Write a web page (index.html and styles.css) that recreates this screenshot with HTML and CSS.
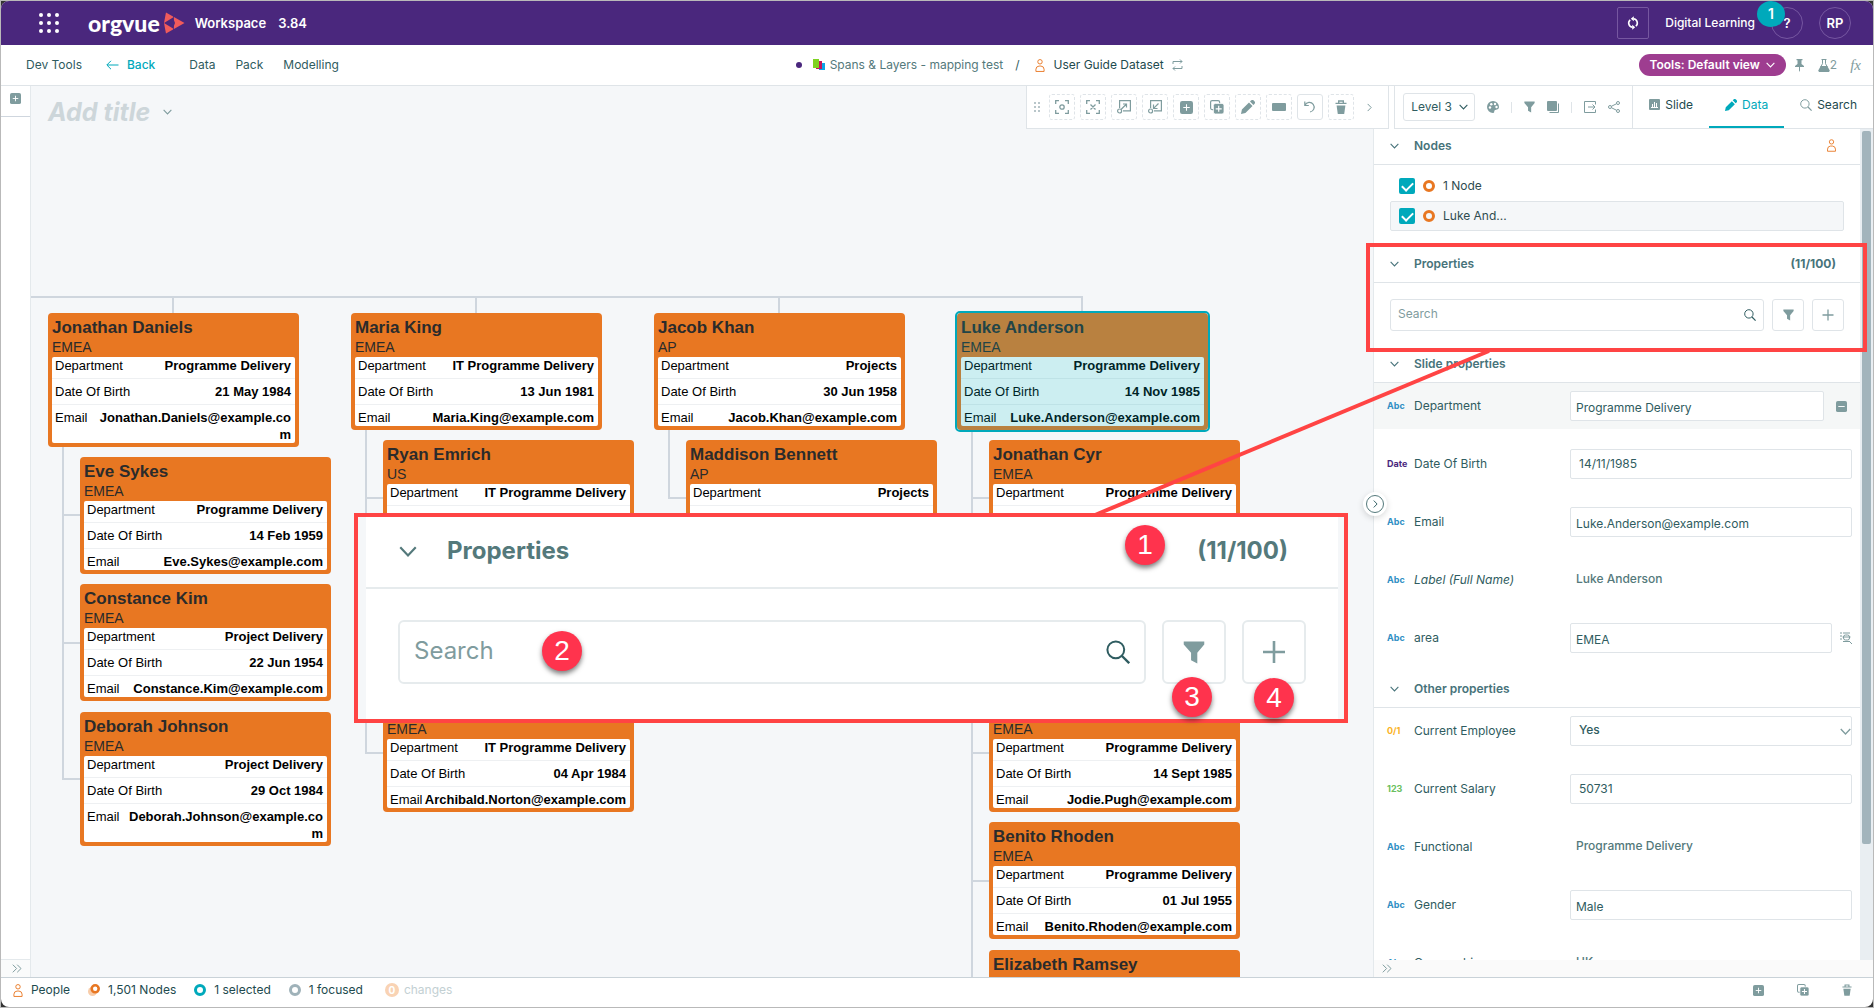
FILE: index.html
```html
<!DOCTYPE html>
<html lang="en">
<head>
  <meta charset="UTF-8" />
  <meta name="viewport" content="width=device-width, initial-scale=1.0" />
  <title>Orgvue Workspace</title>
  <link rel="stylesheet" href="styles.css">
</head>
<body>
  <!-- shared icons -->
  <svg class="sprite" aria-hidden="true">
    <symbol id="i-person" viewBox="0 0 10 14"><g fill="none" stroke="currentColor"><circle cx="5" cy="3" r="2.4" /><path d="M.6 13.4V11A3.6 3.6 0 0 1 4 7.6h2A3.6 3.6 0 0 1 9.4 11v2.4z" /></g></symbol>
    <symbol id="i-plus-box" viewBox="0 0 12 12"><rect width="12" height="12" rx="2" fill="currentColor" /><path d="M6 3v6M3 6h6" stroke="#fff" /></symbol>
    <symbol id="i-minus-box" viewBox="0 0 12 12"><rect width="12" height="12" rx="2" fill="currentColor" /><path d="M2.5 6h7" stroke="#fff" /></symbol>
    <symbol id="i-copy" viewBox="0 0 14 14"><rect x=".6" y=".6" width="9" height="9" rx="1.5" fill="none" stroke="currentColor" stroke-width="1.2" /><rect x="3.4" y="3.4" width="10.6" height="10.6" rx="2" fill="currentColor" stroke="#fff" stroke-width=".8" /><path d="M8.7 5.8v6M5.7 8.8h6" stroke="#fff" stroke-width="1.2" /></symbol>
    <symbol id="i-trash" viewBox="0 0 12 14"><path d="M.5 3.4h11M3.7 3V1h4.6v2" fill="none" stroke="currentColor" stroke-width="1.4" /><path d="M1.6 5.4h8.8L9.2 14H2.8z" fill="currentColor" /></symbol>
    <symbol id="i-down" viewBox="0 0 10 6"><path d="M.7.7 5 5.2 9.3.7" fill="none" stroke="currentColor" stroke-width="1.2" /></symbol>
    <symbol id="i-right" viewBox="0 0 6 10"><path d="M.8.7 5 5 .8 9.3" fill="none" stroke="currentColor" stroke-width="1.2" /></symbol>
    <symbol id="i-double" viewBox="0 0 10 9"><path d="M.8.7 4.6 4.5.8 8.3M5.2.7 9 4.5 5.2 8.3" fill="none" stroke="currentColor" /></symbol>
    <symbol id="i-filter" viewBox="0 0 12 12"><path d="M.4 0h11.2v1.6L7.8 6.2V12L4.4 10.2v-4L.4 1.6z" fill="currentColor" /></symbol>
    <symbol id="i-search" viewBox="0 0 12 12"><circle cx="4.9" cy="4.9" r="4.2" fill="none" stroke="currentColor" /><path d="m8 8 3.6 3.6" stroke="currentColor" stroke-width="1.2" /></symbol>
    <symbol id="i-pencil" viewBox="0 0 14 14"><path d="m0 14 .9-4.400L8 2.500 11.500 6l-7.100 7.100zM9 1.600l1-1a2 2 0 0 1 2.800 0l.6.6a2 2 0 0 1 0 2.800l-1 1z" fill="currentColor" /></symbol>
    <symbol id="i-plus" viewBox="0 0 12 12"><path d="M6 .5v11M.5 6h11" stroke="currentColor" stroke-width="1.3" /></symbol>
  </svg>

  <div class="app">
    <header class="topbar">
      <button class="icon-btn apps-btn" aria-label="Apps">
        <svg width="22" height="22" viewBox="0 0 22 22" fill="#fff"><circle cx="3" cy="3" r="2" /><circle cx="11" cy="3" r="2" /><circle cx="19" cy="3" r="2" /><circle cx="3" cy="11" r="2" /><circle cx="11" cy="11" r="2" /><circle cx="19" cy="11" r="2" /><circle cx="3" cy="19" r="2" /><circle cx="11" cy="19" r="2" /><circle cx="19" cy="19" r="2" /></svg>
      </button>
      <span class="logo">orgvue</span>
      <svg class="logo-mark" width="22" height="22" viewBox="0 0 22 22"><path d="M3 .5 21.5 11 3 21.500 1 11z" fill="#f15b5b" /><path d="M1 11 10 5.500 12 11 10 16.500z" fill="#4a277d" /><path d="M10.500 4v14" stroke="#4a277d" stroke-width=".8" /></svg>
      <span class="product">Workspace</span>
      <span class="version">3.84</span>
      <div class="topbar-right">
        <button class="icon-btn sync-btn" aria-label="Sync">
          <svg width="12" height="14" viewBox="0 0 12 14" fill="none" stroke="#fff" stroke-width="1.6"><path d="M6.5 2.800A4.200 4.200 0 0 1 8.800 10.200M5.500 11.200A4.200 4.200 0 0 1 3.200 3.800" /><path d="M6.800.3v5L3.800 2.800zM5.200 8.700v5l3-2.500z" fill="#fff" stroke="none" /></svg>
        </button>
        <span class="tenant">Digital Learning</span>
        <div class="help">
          <button class="round-btn" aria-label="Help">?</button>
          <span class="help-badge">1</span>
        </div>
        <button class="round-btn user-btn">RP</button>
      </div>
    </header>

    <nav class="navbar">
      <div class="nav-left">
        <a href="#">Dev Tools</a>
        <a href="#" class="back"><svg width="13" height="10" viewBox="0 0 13 10" fill="none" stroke="currentColor"><path d="M12.5 5H1M5 .8.8 5 5 9.2" /></svg>Back</a>
        <a href="#">Data</a>
        <a href="#">Pack</a>
        <a href="#">Modelling</a>
      </div>
      <div class="crumbs">
        <span class="dot"></span>
        <svg width="12" height="12" viewBox="0 0 12 12"><rect x="6" y="4" width="6" height="7" fill="#0aa5e8" /><rect x="3" y="2" width="6" height="8" fill="#c2185b" /><rect width="6" height="9" fill="#7ed321" /></svg>
        <a href="#" class="crumb">Spans &amp; Layers - mapping test</a>
        <span class="slash">/</span>
        <svg class="orange" width="10" height="13"><use href="#i-person" /></svg>
        <a href="#" class="crumb-current">User Guide Dataset</a>
        <svg class="muted" width="11" height="12" viewBox="0 0 11 12" fill="none" stroke="currentColor"><path d="M1 5V2.500h9M8 .5l2 2-2 2M10 7v2.500H1M3 7.500l-2 2 2 2" /></svg>
      </div>
      <div class="nav-right">
        <button class="view-pill">Tools: Default view <svg width="9" height="6"><use href="#i-down" /></svg></button>
        <button class="icon-btn" aria-label="Pin"><svg width="9" height="13" viewBox="0 0 9 13"><path d="M1.5 0h6v1.200h-1V5L9 7v1H5v3.500L4.500 13 4 11.500V8H0V7l2.500-2V1.200h-1z" fill="currentColor" /></svg></button>
        <button class="icon-btn lab-btn"><svg width="12" height="13" viewBox="0 0 12 13"><path d="M3.5.5h5M4.500.5v4.200L2.600 8M7.500.5v4.200L9.400 8" fill="none" stroke="currentColor" /><path d="M2.800 7h6.400l2.600 4.500L11 13H1L.2 11.500z" fill="currentColor" /></svg>2</button>
        <button class="icon-btn fx-btn">fx</button>
      </div>
    </nav>

    <main class="workspace">
      <aside class="rail">
        <button class="icon-btn rail-add" aria-label="Add"><svg width="11" height="11"><use href="#i-plus-box" /></svg></button>
        <button class="icon-btn rail-expand" aria-label="Expand"><svg width="10" height="9"><use href="#i-double" /></svg></button>
      </aside>

      <section class="canvas">
        <div class="chart" id="chart"></div>
        <h1 class="title">Add title <svg width="9" height="6"><use href="#i-down" /></svg></h1>
      </section>

      <aside class="panel">
        <div class="panel-scroll">
          <div class="panel-body">
            <h2 class="section-head"><svg width="9" height="6"><use href="#i-down" /></svg>Nodes <svg class="orange head-end" width="9" height="13"><use href="#i-person" /></svg></h2>
            <div class="node-list">
              <label class="node-row"><input type="checkbox" checked><span class="ring ring-orange"></span>1 Node</label>
              <label class="node-row current"><input type="checkbox" checked><span class="ring ring-orange"></span>Luke And...</label>
            </div>

            <h2 class="section-head"><svg width="9" height="6"><use href="#i-down" /></svg>Properties <span class="head-end">(11/100)</span></h2>
            <div class="prop-search">
              <label class="search-box"><input type="text" placeholder="Search" aria-label="Search properties"><svg width="12" height="12"><use href="#i-search" /></svg></label>
              <button class="square-btn" aria-label="Filter"><svg width="11" height="12"><use href="#i-filter" /></svg></button>
              <button class="square-btn" aria-label="Add property"><svg width="12" height="12"><use href="#i-plus" /></svg></button>
            </div>

            <h2 class="section-head"><svg width="9" height="6"><use href="#i-down" /></svg>Slide properties</h2>
            <div class="fields">
              <div class="field hovered">
                <span class="type abc">Abc</span><label for="department">Department</label>
                <input class="text" id="department" type="text" value="Programme Delivery">
                <button class="icon-btn minus-btn" aria-label="Remove"><svg width="11" height="11"><use href="#i-minus-box" /></svg></button>
              </div>
              <div class="field">
                <span class="type date">Date</span><label for="dob">Date Of Birth</label>
                <input id="dob" type="text" value="14/11/1985">
              </div>
              <div class="field">
                <span class="type abc">Abc</span><label for="email">Email</label>
                <input class="text" id="email" type="text" value="Luke.Anderson@example.com">
              </div>
              <div class="field">
                <span class="type abc">Abc</span><span class="name"><em>Label (Full Name)</em></span>
                <span class="readonly">Luke Anderson</span>
              </div>
              <div class="field">
                <span class="type abc">Abc</span><label for="area">area</label>
                <input class="text" id="area" type="text" value="EMEA">
                <button class="icon-btn lookup-btn" aria-label="Look up"><svg width="12" height="12" viewBox="0 0 12 12" fill="none" stroke="currentColor"><path d="M0 1h2M0 4h2M0 7h2M3 1h7M3 9.500h6M2.500 5h8M9 9l3 3" /><rect x="3.5" y="3" width="6" height="5" rx="2" /></svg></button>
              </div>
            </div>

            <h2 class="section-head"><svg width="9" height="6"><use href="#i-down" /></svg>Other properties</h2>
            <div class="fields">
              <div class="field">
                <span class="type bool">0/1</span><label for="employee">Current Employee</label>
                <span class="select-wrap"><select id="employee"><option>Yes</option><option>No</option></select><svg width="11" height="7"><use href="#i-down" /></svg></span>
              </div>
              <div class="field">
                <span class="type num">123</span><label for="salary">Current Salary</label>
                <input id="salary" type="text" value="50731">
              </div>
              <div class="field">
                <span class="type abc">Abc</span><span class="name">Functional</span>
                <span class="readonly">Programme Delivery</span>
              </div>
              <div class="field">
                <span class="type abc">Abc</span><label for="gender">Gender</label>
                <input class="text" id="gender" type="text" value="Male">
              </div>
              <div class="field">
                <span class="type abc">Abc</span><span class="name">Geographic</span>
                <span class="readonly">UK</span>
              </div>
            </div>
          </div>
          <div class="scrollbar"><div class="thumb"></div></div>
        </div>
        <div class="panel-foot"><button class="icon-btn" aria-label="Expand panel"><svg width="10" height="9"><use href="#i-double" /></svg></button></div>
        <button class="collapse-btn" aria-label="Collapse panel"><span><svg width="5" height="8"><use href="#i-right" /></svg></span></button>
        <div class="highlight"></div>
      </aside>

      <div class="tools">
        <div class="edit-tools">
          <svg class="grip" width="6" height="10" viewBox="0 0 6 10" fill="currentColor"><path d="M0 0h2v2H0zM4 0h2v2H4zM0 4h2v2H0zM4 4h2v2H4zM0 8h2v2H0zM4 8h2v2H4z" /></svg>
          <button class="tool" aria-label="Focus"><svg width="14" height="14" viewBox="0 0 14 14" fill="none" stroke="currentColor" stroke-width="1.3"><path d="M.7 4V.7H4M10 .7h3.300V4M13.300 10v3.300H10M4 13.300H.7V10" /><circle cx="7" cy="7" r="2.2" /></svg></button>
          <button class="tool" aria-label="Clear focus"><svg width="14" height="14" viewBox="0 0 14 14" fill="none" stroke="currentColor" stroke-width="1.3"><path d="M.7 4V.7H4M10 .7h3.300V4M13.300 10v3.300H10M4 13.300H.7V10M4.500 4.500l5 5M9.500 4.500l-5 5" /></svg></button>
          <button class="tool" aria-label="Expand"><svg width="14" height="14" viewBox="0 0 14 14" fill="none" stroke="currentColor" stroke-width="1.2"><path d="M2.6 8V.6h10.800v10.200H6M4 9.500l5-5M6 4h3.500v3.500" /><circle cx="2.6" cy="11" r="2" /></svg></button>
          <button class="tool" aria-label="Collapse"><svg width="14" height="14" viewBox="0 0 14 14" fill="none" stroke="currentColor" stroke-width="1.2"><path d="M2.6 8V.6h10.800v10.200H6M10.500 3.500 5.600 8.400M5.500 4.500v4h4" /><circle cx="2.6" cy="11" r="2" /></svg></button>
          <button class="tool" aria-label="Add node"><svg width="13" height="13"><use href="#i-plus-box" /></svg></button>
          <button class="tool" aria-label="Copy node"><svg width="14" height="14"><use href="#i-copy" /></svg></button>
          <button class="tool" aria-label="Edit"><svg width="14" height="14"><use href="#i-pencil" /></svg></button>
          <button class="tool" aria-label="Card"><svg width="14" height="8"><rect width="14" height="8" rx="1" fill="currentColor" /></svg></button>
          <button class="tool solid" aria-label="Undo"><svg width="12" height="12" viewBox="0 0 12 12" fill="none" stroke="currentColor" stroke-width="1.2"><path d="M.8.5v4h4M1 4.200A4.800 4.800 0 1 1 6 11" /></svg></button>
          <button class="tool" aria-label="Delete"><svg width="12" height="14"><use href="#i-trash" /></svg></button>
          <button class="icon-btn more-btn" aria-label="More"><svg width="5" height="9"><use href="#i-right" /></svg></button>
        </div>
        <div class="view-tools">
          <span class="level"><select aria-label="Level"><option>Level 3</option></select><svg width="9" height="6"><use href="#i-down" /></svg></span>
          <button class="icon-btn palette" aria-label="Colours"><svg width="12" height="12" viewBox="0 0 12 12"><path d="M6 0a6 6 0 0 0 0 12c1.500 0 1-1.500 1.500-2.500S12 9 12 6a6 6 0 0 0-6-6z" fill="currentColor" /><g fill="#fff"><circle cx="3" cy="6.5" r="1.2" /><circle cx="4.3" cy="3.2" r="1.2" /><circle cx="8" cy="3" r="1.2" /><circle cx="9.5" cy="6" r="1.2" /></g></svg></button>
          <span class="sep"></span>
          <button class="icon-btn" aria-label="Filter"><svg width="11" height="12"><use href="#i-filter" /></svg></button>
          <button class="icon-btn" aria-label="Layers"><svg width="12" height="12" viewBox="0 0 12 12"><rect width="10" height="10" rx="1" fill="currentColor" /><path d="M11.5 2.500v9h-9" fill="none" stroke="currentColor" /></svg></button>
          <span class="sep"></span>
          <button class="icon-btn" aria-label="Export"><svg width="12" height="12" viewBox="0 0 12 12" fill="none" stroke="currentColor"><path d="M11.5 3.500v-3H.5v11h11v-3M4 6h7M8.500 3.500 11 6 8.500 8.500" /></svg></button>
          <button class="icon-btn" aria-label="Share"><svg width="12" height="12" viewBox="0 0 12 12" fill="none" stroke="currentColor"><circle cx="2" cy="6" r="1.5" /><circle cx="10" cy="2" r="1.5" /><circle cx="10" cy="10" r="1.5" /><path d="m3.4 5.300 5.200-2.600M3.400 6.700l5.200 2.600" /></svg></button>
          <div class="tabs">
            <button class="tab"><svg width="11" height="11" viewBox="0 0 11 11"><rect width="11" height="11" rx="1" fill="currentColor" /><path d="M2 8.500h7M3.500 8V5M5.500 8V3M7.500 8V4" stroke="#fff" /></svg>Slide</button>
            <button class="tab active"><svg width="12" height="12"><use href="#i-pencil" /></svg>Data</button>
            <button class="tab"><svg width="12" height="12"><use href="#i-search" /></svg>Search</button>
          </div>
        </div>
      </div>
    </main>

    <footer class="statusbar">
      <span class="status"><svg class="orange" width="10" height="13"><use href="#i-person" /></svg>People</span>
      <span class="status"><svg width="12" height="12" viewBox="0 0 12 12" fill="none"><circle cx="4.5" cy="7.5" r="4.5" fill="#f8cdaa" /><circle cx="7.2" cy="4.8" r="3.5" fill="#fff" stroke="#e87722" stroke-width="2.6" /></svg>1,501 Nodes</span>
      <span class="status"><span class="ring ring-teal"></span>1 selected</span>
      <span class="status"><span class="ring ring-grey"></span>1 focused</span>
      <span class="status changes"><span class="count">0</span>changes</span>
      <div class="status-tools">
        <button class="icon-btn" aria-label="Add"><svg width="11" height="11"><use href="#i-plus-box" /></svg></button>
        <button class="icon-btn" aria-label="Copy"><svg width="12" height="12"><use href="#i-copy" /></svg></button>
        <button class="icon-btn" aria-label="Delete"><svg width="10" height="12"><use href="#i-trash" /></svg></button>
      </div>
    </footer>
  </div>

  <!-- guide annotations -->
  <svg class="leader"><path d="M1488 350 1094 514" stroke="#ff4444" stroke-width="4" /></svg>
  <div class="callout">
    <div class="callout-inner">
      <h2 class="callout-head"><svg width="18" height="11"><use href="#i-down" /></svg>Properties <span class="head-end">(11/100)</span></h2>
      <div class="callout-search">
        <label class="search-box"><input type="text" placeholder="Search" aria-label="Search"><svg width="24" height="24"><use href="#i-search" /></svg></label>
        <button class="square-btn" aria-label="Filter"><svg width="22" height="23"><use href="#i-filter" /></svg></button>
        <button class="square-btn" aria-label="Add"><svg width="24" height="24"><use href="#i-plus" /></svg></button>
      </div>
    </div>
    <span class="marker marker-1">1</span>
    <span class="marker marker-2">2</span>
    <span class="marker marker-3">3</span>
    <span class="marker marker-4">4</span>
  </div>

  <script>
    const cards = [
      { x: 17, y: 227, name: "Jonathan Daniels", area: "EMEA", dept: "Programme Delivery", dob: "21 May 1984", email: "Jonathan.Daniels@example.com" },
      { x: 49, y: 371, name: "Eve Sykes", area: "EMEA", dept: "Programme Delivery", dob: "14 Feb 1959", email: "Eve.Sykes@example.com" },
      { x: 49, y: 498, name: "Constance Kim", area: "EMEA", dept: "Project Delivery", dob: "22 Jun 1954", email: "Constance.Kim@example.com" },
      { x: 49, y: 626, name: "Deborah Johnson", area: "EMEA", dept: "Project Delivery", dob: "29 Oct 1984", email: "Deborah.Johnson@example.com" },
      { x: 320, y: 227, name: "Maria King", area: "EMEA", dept: "IT Programme Delivery", dob: "13 Jun 1981", email: "Maria.King@example.com" },
      { x: 352, y: 354, name: "Ryan Emrich", area: "US", dept: "IT Programme Delivery" },
      { x: 352, y: 609, name: "Archibald Norton", area: "EMEA", dept: "IT Programme Delivery", dob: "04 Apr 1984", email: "Archibald.Norton@example.com" },
      { x: 623, y: 227, name: "Jacob Khan", area: "AP", dept: "Projects", dob: "30 Jun 1958", email: "Jacob.Khan@example.com" },
      { x: 655, y: 354, name: "Maddison Bennett", area: "AP", dept: "Projects" },
      { x: 926, y: 227, name: "Luke Anderson", area: "EMEA", dept: "Programme Delivery", dob: "14 Nov 1985", email: "Luke.Anderson@example.com", selected: true },
      { x: 958, y: 354, name: "Jonathan Cyr", area: "EMEA", dept: "Programme Delivery" },
      { x: 958, y: 609, name: "Jodie Pugh", area: "EMEA", dept: "Programme Delivery", dob: "14 Sept 1985", email: "Jodie.Pugh@example.com" },
      { x: 958, y: 736, name: "Benito Rhoden", area: "EMEA", dept: "Programme Delivery", dob: "01 Jul 1955", email: "Benito.Rhoden@example.com" },
      { x: 958, y: 864, name: "Elizabeth Ramsey" }
    ];

    // trunk of each column: x, then the y of every branch
    const trunks = [
      { x: 32, branches: [429, 557, 693] },
      { x: 335, branches: [412, 667] },
      { x: 638, branches: [412] },
      { x: 941, branches: [412, 540, 667, 795, 900] }
    ];

    function row(label, value) {
      return value ? `<div class="card-row"><span>${label}</span><b>${value}</b></div>` : "";
    }

    function drawChart() {
      let path = "M0 211H1051";
      trunks.forEach(t => {
        path += `M${t.x + 110} 211V227M${t.x} 340V${t.branches[t.branches.length - 1]}`;
        t.branches.forEach(y => path += `M${t.x - 1} ${y}h18`);
      });
      path += "M1051 210V227";

      let html = `<svg class="links"><path d="${path}" /></svg>`;
      cards.forEach(c => {
        html += `
          <article class="card${c.selected ? " selected" : ""}" style="left:${c.x}px;top:${c.y}px">
            <h3>${c.name}</h3>
            <p>${c.area || "&nbsp;"}</p>
            <div class="card-body">
              ${row("Department", c.dept)}
              ${row("Date Of Birth", c.dob)}
              ${row("Email", c.email)}
            </div>
          </article>`;
      });
      document.getElementById("chart").innerHTML = html;
    }

    drawChart();
  </script>
</body>
</html>
```
FILE: styles.css
```css
* {
  box-sizing: border-box;
}
html, body {
  height: 100%;
}
body {
  margin: 0;
  background: #333;
  color: #2f5c60;
  font-family: Inter, "Liberation Sans", sans-serif;
  font-size: 12px;
  line-height: 16px;
  border: 1px solid #b9b9b9;
  position: relative;
  overflow: hidden;
}
h1, h2, h3, p {
  margin: 0;
}
svg {
  flex: none;
  display: block;
}
button, input, select {
  font: inherit;
  color: inherit;
}
button {
  cursor: pointer;
  padding: 0;
}
a {
  color: inherit;
  text-decoration: none;
}
.sprite {
  position: absolute;
  width: 0;
  height: 0;
}
.orange {
  color: #e87722;
}
.muted {
  color: #7f9c9e;
}
.icon-btn {
  background: none;
  border: 0;
  display: flex;
  align-items: center;
  color: #7f9c9e;
}
.app {
  height: 100%;
  display: flex;
  flex-direction: column;
  background: #fff;
  border-radius: 8px;
  overflow: hidden;
}

/* top bar */
.topbar {
  height: 44px;
  flex: none;
  background: #4a277d;
  color: #fff;
  display: flex;
  align-items: center;
  padding: 0 22px 0 37px;
  font-weight: 500;
}
.logo {
  font-family: Lato, sans-serif;
  font-weight: 900;
  font-size: 23px;
  line-height: 28px;
  margin-left: 28px;
}
.logo-mark {
  margin-left: 3px;
}
.product, .version {
  font-size: 13px;
  font-weight: 600;
}
.product {
  margin-left: 10px;
}
.version {
  margin-left: 12px;
}
.topbar-right {
  margin-left: auto;
  display: flex;
  align-items: center;
}
.sync-btn {
  width: 32px;
  height: 32px;
  justify-content: center;
  border: 1px solid #7657a0;
  border-radius: 2px;
}
.tenant {
  margin: 0 16px;
}
.round-btn {
  width: 32px;
  height: 32px;
  border: 1px solid #7657a0;
  border-radius: 50%;
  background: none;
  font-weight: 600;
  font-size: 13px;
}
.user-btn {
  margin-left: 16px;
}
.help {
  position: relative;
}
.help-badge {
  position: absolute;
  left: -14px;
  top: -6px;
  width: 28px;
  height: 26px;
  border-radius: 50%;
  background: #00a9bb;
  text-align: center;
  font-size: 14px;
  line-height: 26px;
  font-weight: 600;
}

/* navigation */
.navbar {
  height: 41px;
  flex: none;
  border-bottom: 1px solid #dfe4e8;
  display: flex;
  align-items: center;
  justify-content: space-between;
  padding: 0 12px 0 25px;
}
.nav-left {
  display: flex;
  gap: 20px;
}
.back {
  display: flex;
  align-items: center;
  gap: 8px;
  color: #00a9bb;
  font-weight: 500;
  margin: 0 14px 0 4px;
}
.crumbs {
  display: flex;
  align-items: center;
}
.crumbs .dot {
  width: 6px;
  height: 6px;
  border-radius: 50%;
  background: #4a277d;
  margin-right: 11px;
}
.crumb {
  margin: 0 12px 0 5px;
  color: #54797b;
}
.slash {
  margin-right: 16px;
}
.crumb-current {
  margin: 0 8px;
  color: #1d4a4e;
}
.nav-right {
  display: flex;
  align-items: center;
}
.view-pill {
  height: 22px;
  border: 0;
  border-radius: 11px;
  background: #9e3d90;
  color: #fff;
  font-weight: 600;
  padding: 0 11px 0 10px;
  margin-right: 9px;
  display: flex;
  align-items: center;
  gap: 6px;
}
.lab-btn {
  margin: 0 13px 0 14px;
}
.fx-btn {
  font-family: "Liberation Serif", serif;
  font-style: italic;
  font-size: 15px;
}

/* workspace */
.workspace {
  flex: 1;
  min-height: 0;
  display: flex;
  position: relative;
}
.rail {
  width: 30px;
  flex: none;
  border-right: 1px solid #e4e9ec;
  display: flex;
  flex-direction: column;
  justify-content: space-between;
}
.rail-add {
  height: 31px;
  padding: 2px 9px 8px;
  border-bottom: 1px solid #cfd6de;
}
.rail-expand {
  height: 18px;
  padding-left: 11px;
  border-top: 1px solid #e4e9ec;
  background: #fafbfb;
}
.canvas {
  flex: 1;
  min-width: 0;
  position: relative;
  overflow: hidden;
  background: #f5f7f9;
}
.title {
  position: relative;
  padding: 11px 17px;
  display: flex;
  align-items: center;
  gap: 13px;
  color: #cdd6da;
  font-size: 25px;
  line-height: 30px;
  font-style: italic;
  font-weight: 700;
}
.title svg {
  color: #7f9c9e;
}
.chart {
  position: absolute;
  inset: 0;
  font-family: "Liberation Sans", Arial, sans-serif;
}
.links {
  width: 100%;
  height: 100%;
  fill: none;
  stroke: #cfd6de;
  stroke-width: 2;
}
.card {
  position: absolute;
  width: 251px;
  padding: 5px 4px 4px;
  background: #e87722;
  border-radius: 4px;
  color: #2b2b2b;
}
.card h3 {
  font-size: 17px;
  line-height: 20px;
}
.card p {
  font-size: 14px;
  line-height: 19px;
}
.card-body {
  min-height: 69px;
  background: #fff;
  border-radius: 2px;
  color: #000;
  font-size: 13px;
  line-height: 17px;
}
.card-row {
  display: flex;
  justify-content: space-between;
  padding: 4px 4px 4px 3px;
  border-bottom: 1px solid #eef0f2;
}
.card-row:first-child {
  padding-top: 0;
}
.card-row:nth-child(3) {
  padding-bottom: 0;
  border-bottom: 0;
}
.card-row b {
  max-width: 202px;
  text-align: right;
  word-break: break-all;
}
.card.selected::after {
  content: "";
  position: absolute;
  inset: -2px;
  border: 2px solid #00a9bb;
  border-radius: 5px;
  background: rgba(0, 169, 187, 0.2);
}

/* toolbars over the canvas */
.tools {
  position: absolute;
  top: 0;
  right: 0;
  height: 43px;
  display: flex;
  gap: 5px;
}
.edit-tools, .view-tools {
  display: flex;
  align-items: center;
  background: #fff;
  border: 1px solid #dfe4e8;
  border-top: 0;
}
.edit-tools {
  gap: 5px;
  padding: 0 16px 0 7px;
}
.grip {
  color: #b9c6ca;
  margin-right: 4px;
}
.tool {
  width: 26px;
  height: 26px;
  background: #fff;
  border: 1px dashed #dfe4e8;
  border-radius: 3px;
  color: #7f9c9e;
  display: flex;
  align-items: center;
  justify-content: center;
}
.tool.solid {
  border-style: solid;
}
.more-btn {
  margin-left: 8px;
}
.view-tools {
  border-right: 0;
  padding-left: 8px;
  gap: 12px;
}
.level {
  position: relative;
  width: 72px;
}
.level select {
  appearance: none;
  width: 100%;
  height: 28px;
  padding: 0 7px;
  background: #fff;
  border: 1px solid #dfe4e8;
  border-radius: 3px;
}
.level svg {
  position: absolute;
  right: 7px;
  top: 11px;
}
.sep {
  width: 1px;
  height: 11px;
  background: #dfe4e8;
}
.tabs {
  display: flex;
  align-self: stretch;
  border-left: 1px solid #dfe4e8;
}
.tab {
  display: flex;
  align-items: center;
  gap: 5px;
  background: none;
  border: 0;
  border-bottom: 2px solid transparent;
  padding: 0 16px 3px;
  color: #1d4a4e;
}
.tab svg {
  color: #7f9c9e;
}
.tab.active, .tab.active svg {
  color: #00a9bb;
}
.tab.active {
  border-color: #00a9bb;
}

/* data panel */
.panel {
  width: 500px;
  flex: none;
  position: relative;
  display: flex;
  flex-direction: column;
  padding-top: 43px;
  border-left: 1px solid #e4e9ec;
}
.panel-scroll {
  flex: 1;
  min-height: 0;
  display: flex;
}
.panel-body {
  flex: 1;
  overflow: hidden;
}
.scrollbar {
  width: 13px;
  background: #e9eef2;
  padding: 2px 2px 0 2px;
}
.thumb {
  height: 86%;
  background: #a2b4bc;
  border-radius: 2px;
}
.section-head {
  height: 36px;
  display: flex;
  align-items: center;
  padding: 0 20px 2px 16px;
  border-bottom: 1px solid #dfe4e8;
  font-size: 12px;
  font-weight: 600;
  color: #47737a;
}
.section-head > svg:first-child {
  margin-right: 15px;
}
.head-end {
  margin-left: auto;
  font-weight: 700;
}
.section-head .head-end {
  margin-right: 4px;
}
.node-list {
  padding: 6px 16px 16px;
}
.node-row {
  height: 30px;
  display: flex;
  align-items: center;
  padding-left: 9px;
  color: #2f4c50;
}
.node-row.current {
  background: #f5f7f9;
  border: 1px solid #dfe4e8;
  border-radius: 2px;
  padding-left: 8px;
}
.node-row input {
  appearance: none;
  width: 16px;
  height: 16px;
  margin: 0 8px 0 0;
  border-radius: 2px;
  background: #00a9bb;
  display: flex;
  justify-content: center;
}
.node-row input::before {
  content: "";
  width: 5px;
  height: 9px;
  margin-top: 2px;
  border: solid #fff;
  border-width: 0 2px 2px 0;
  transform: rotate(45deg);
}
.ring {
  width: 12px;
  height: 12px;
  border-radius: 50%;
  border: 3px solid #e87722;
  margin-right: 8px;
}
.ring-teal {
  border-color: #00a9bb;
}
.ring-grey {
  border-color: #9fb2b9;
}
.prop-search {
  display: flex;
  gap: 8px;
  padding: 16px;
}
.search-box {
  flex: 1;
  display: flex;
  align-items: center;
  height: 32px;
  padding: 0 7px;
  border: 1px solid #dfe4e8;
  border-radius: 3px;
}
.search-box input {
  flex: 1;
  min-width: 0;
  border: 0;
  outline: 0;
  padding: 0 0 2px;
  background: none;
}
.search-box input::placeholder {
  color: #7f9c9e;
}
.square-btn {
  width: 32px;
  height: 32px;
  display: flex;
  align-items: center;
  justify-content: center;
  background: #fff;
  border: 1px solid #dfe4e8;
  border-radius: 3px;
  color: #7f9c9e;
}
.fields {
  display: flex;
  flex-direction: column;
  gap: 12px;
  padding-bottom: 11px;
}
.field {
  height: 46px;
  display: flex;
  align-items: center;
  padding: 0 8px 0 13px;
}
.field.hovered {
  background: #f5f7f7;
}
.type {
  width: 27px;
  font-size: 9px;
  font-weight: 700;
}
.abc {
  color: #2f8fc4;
}
.date {
  color: #4a277d;
}
.bool {
  color: #fbb324;
}
.num {
  color: #6abf5e;
}
.field label, .field .name {
  width: 156px;
}
.field input, .field select {
  flex: 1;
  min-width: 0;
  height: 30px;
  padding: 0 8px 2px;
  background: #fff;
  border: 1px solid #dfe4e8;
  border-radius: 2px;
}
.field input.text {
  padding: 2px 5px 0;
}
.readonly {
  padding: 0 0 2px 6px;
  font-weight: 500;
  color: #54797b;
}
.minus-btn {
  margin: 0 5px 0 12px;
}
.lookup-btn {
  margin-left: 8px;
}
.select-wrap {
  flex: 1;
  display: flex;
  position: relative;
}
.field select {
  appearance: none;
  font-weight: 500;
}
.select-wrap svg {
  position: absolute;
  right: 1px;
  top: 12px;
  color: #7f9c9e;
}
.panel-foot {
  height: 17px;
  flex: none;
  display: flex;
  padding-left: 8px;
  background: #fafafa;
}
.collapse-btn {
  position: absolute;
  left: -11px;
  top: 406px;
  width: 24px;
  height: 24px;
  padding: 3px;
  border: 0;
  border-radius: 50%;
  background: #fff;
  box-shadow: 0 2px 6px rgba(0, 0, 0, 0.15);
}
.collapse-btn span {
  display: flex;
  align-items: center;
  justify-content: center;
  height: 18px;
  border: 1px solid #54797b;
  border-radius: 50%;
}
.highlight {
  position: absolute;
  left: -8px;
  right: 6px;
  top: 157px;
  height: 109px;
  border: 4px solid #ff4444;
  pointer-events: none;
}

/* status bar */
.statusbar {
  height: 30px;
  flex: none;
  border-top: 1px solid #c9d2d8;
  display: flex;
  align-items: center;
  gap: 18px;
  padding: 0 21px 5px 12px;
  color: #1d4a4e;
}
.status {
  display: flex;
  align-items: center;
}
.status svg {
  margin-right: 8px;
}
.changes {
  color: #c3d0d3;
  margin-left: 4px;
}
.count {
  width: 14px;
  height: 14px;
  border-radius: 50%;
  background: #f9d3b4;
  color: #fff;
  font-size: 10px;
  line-height: 14px;
  font-weight: 700;
  text-align: center;
  margin-right: 5px;
}
.status-tools {
  margin-left: auto;
  display: flex;
  gap: 33px;
}

/* annotations */
.leader {
  position: absolute;
  inset: 0;
  width: 100%;
  height: 100%;
  pointer-events: none;
}
.callout {
  position: absolute;
  left: 353px;
  top: 512px;
  width: 994px;
  height: 210px;
  border: 4px solid #ff4444;
  background: #f5f7f9;
  padding: 0 6px 0 8px;
}
.callout-inner {
  height: 100%;
  background: #fff;
}
.callout-head {
  height: 72px;
  display: flex;
  align-items: center;
  padding: 0 50px 2px 33px;
  border-bottom: 2px solid #e6ebed;
  font-size: 24px;
  line-height: 32px;
  font-weight: 700;
  color: #54797b;
}
.callout-head svg {
  margin-right: 30px;
}
.callout-search {
  display: flex;
  gap: 16px;
  padding: 31px 32px;
}
.callout .search-box, .callout .square-btn {
  height: 64px;
  border: 2px solid #e6ebed;
  border-radius: 6px;
}
.callout .square-btn {
  width: 64px;
}
.callout .search-box {
  padding: 0 14px;
  font-size: 24px;
  line-height: 32px;
}
.marker {
  position: absolute;
  width: 40px;
  height: 40px;
  border-radius: 50%;
  background: #ff334d;
  color: #fff;
  box-shadow: 0 3px 5px rgba(0, 0, 0, 0.5);
  font: 28px/40px "Liberation Sans", Arial, sans-serif;
  text-align: center;
}
.marker-1 {
  left: 767px;
  top: 8px;
}
.marker-2 {
  left: 184px;
  top: 114px;
}
.marker-3 {
  left: 814px;
  top: 160px;
}
.marker-4 {
  left: 896px;
  top: 161px;
}
```
